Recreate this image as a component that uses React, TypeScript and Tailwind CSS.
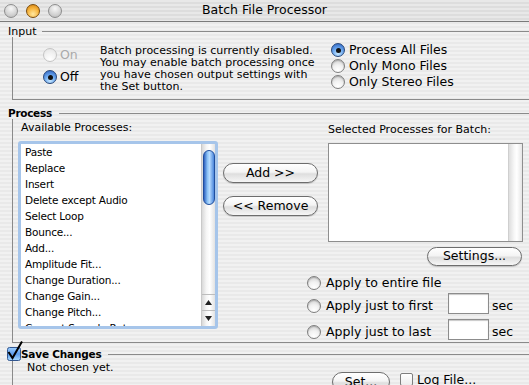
import React from 'react';

const processes = [
  'Paste',
  'Replace',
  'Insert',
  'Delete except Audio',
  'Select Loop',
  'Bounce...',
  'Add...',
  'Amplitude Fit...',
  'Change Duration...',
  'Change Gain...',
  'Change Pitch...',
  'Convert Sample Rate',
];

const Radio: React.FC<{ checked?: boolean; disabled?: boolean }> = ({ checked, disabled }) => {
  if (checked) {
    return (
      <span className="flex h-[14px] w-[14px] shrink-0 items-center justify-center rounded-full border border-[#27477a] bg-[radial-gradient(circle_at_50%_80%,#c8e8ff_0%,#6eaaf0_45%,#2d62c0_95%)]">
        <span className="h-[5px] w-[5px] rounded-full bg-[#111]" />
      </span>
    );
  }
  if (disabled) {
    return <span className="h-[14px] w-[14px] shrink-0 rounded-full border border-[#c4c4c4] bg-[radial-gradient(circle_at_50%_85%,#ffffff_0%,#f2f2f2_50%,#e2e2e2_100%)]" />;
  }
  return (
    <span className="h-[14px] w-[14px] shrink-0 rounded-full border border-[#7e7e7e] bg-[radial-gradient(circle_at_50%_85%,#ffffff_0%,#f1f1f1_45%,#c6c6c6_100%)] shadow-[inset_0_1px_1px_rgba(0,0,0,0.2)]" />
  );
};

const AquaButton: React.FC<{ children: React.ReactNode; className?: string }> = ({ children, className }) => (
  <button
    className={`flex items-center justify-center rounded-full border border-[#6d6d6d] bg-[linear-gradient(to_bottom,#ffffff_0%,#f4f4f4_45%,#dedede_55%,#f6f6f6_100%)] text-[12.5px] leading-none text-black shadow-[0_1px_1px_rgba(0,0,0,0.18)] ${className ?? ''}`}
  >
    {children}
  </button>
);

const ArrowUp = () => (
  <svg width="7" height="5" viewBox="0 0 7 5">
    <path d="M3.5 0 L7 5 L0 5 Z" fill="#222" />
  </svg>
);

const ArrowDown = () => (
  <svg width="7" height="5" viewBox="0 0 7 5">
    <path d="M0 0 L7 0 L3.5 5 Z" fill="#222" />
  </svg>
);

const TextBox = () => (
  <div className="h-[21px] w-[41px] border border-[#8c8c8c] bg-white shadow-[inset_0_1px_1px_rgba(0,0,0,0.22)]" />
);

const App: React.FC = () => {
  return (
    <div className="flex h-[385px] w-[529px] flex-col overflow-hidden bg-[repeating-linear-gradient(to_bottom,#f1f1f1_0px,#f1f1f1_2px,#e9e9e9_2px,#e9e9e9_4px)] font-['DejaVu_Sans',sans-serif] text-black">
      {/* title bar */}
      <div className="grid h-[22px] shrink-0 grid-cols-[1fr_auto_1fr] items-center border-b border-[#7b7b7b] bg-[repeating-linear-gradient(to_bottom,#e8e8e8_0px,#e8e8e8_2px,#dddddd_2px,#dddddd_4px)]">
        <div className="flex items-center gap-[8px] pl-[4px]">
          <span className="h-[14px] w-[14px] rounded-full border border-[#8d8d8d] bg-[radial-gradient(circle_at_50%_30%,#f7f7f7_0%,#d2d2d2_60%,#b4b4b4_100%)]" />
          <span className="h-[14px] w-[14px] rounded-full border border-[#7a4c0c] bg-[radial-gradient(circle_at_50%_75%,#ffe8a0_0%,#f6b23a_55%,#cf7c0c_100%)]" />
          <span className="h-[14px] w-[14px] rounded-full border border-[#8d8d8d] bg-[radial-gradient(circle_at_50%_30%,#f7f7f7_0%,#d2d2d2_60%,#b4b4b4_100%)]" />
        </div>
        <div className="text-[12.5px] leading-none">Batch File Processor</div>
        <div />
      </div>

      {/* Input */}
      <div className="mt-[3px] flex h-[12px] shrink-0 items-center pl-2">
        <span className="text-[11px] leading-none">Input</span>
        <span className="ml-[6px] h-px flex-1 bg-[#8a8a8a]" />
      </div>
      <div className="ml-3 flex h-[63px] shrink-0 items-start border-b border-l border-[#8a8a8a]">
        <div className="ml-[30px] mt-[11px] flex w-[57px] shrink-0 flex-col gap-[8px]">
          <div className="flex h-[14px] items-center gap-[3px]">
            <Radio disabled />
            <span className="text-[12.5px] leading-none text-[#a9a9a9]">On</span>
          </div>
          <div className="flex h-[14px] items-center gap-[3px]">
            <Radio checked />
            <span className="text-[12.5px] leading-none">Off</span>
          </div>
        </div>
        <p className="mt-[8px] w-[231px] shrink-0 whitespace-nowrap text-[11px] leading-[12px]">
          Batch processing is currently disabled.
          <br />
          You may enable batch processing once
          <br />
          you have chosen output settings with
          <br />
          the Set button.
        </p>
        <div className="mt-[6px] flex shrink-0 flex-col gap-[2px]">
          {['Process All Files', 'Only Mono Files', 'Only Stereo Files'].map((label, i) => (
            <div key={label} className="flex h-[14px] items-center gap-[4px]">
              <Radio checked={i === 0} />
              <span className="whitespace-nowrap text-[12.5px] leading-none">{label}</span>
            </div>
          ))}
        </div>
      </div>

      {/* Process */}
      <div className="mt-[7px] flex h-[12px] shrink-0 items-center pl-2">
        <span className="text-[10.5px] font-bold leading-none tracking-[-0.3px]">Process</span>
        <span className="ml-[7px] h-px flex-1 bg-[#8a8a8a]" />
      </div>
      <div className="ml-3 flex h-[224px] shrink-0 border-b border-l border-[#8a8a8a]">
        <div className="w-[205px] shrink-0">
          <div className="pl-[8px] pt-[3px] text-[11px] leading-[12px]">Available Processes:</div>
          <div className="ml-[5px] mt-[7px] flex h-[188px] w-[200px] rounded-[3px] border-[3px] border-[#a6c5ea]">
            <div className="flex-1 overflow-hidden bg-white pl-[4px]">
              {processes.map((p) => (
                <div key={p} className="h-[16px] whitespace-nowrap text-[10.5px] leading-[16px] tracking-[-0.2px]">
                  {p}
                </div>
              ))}
            </div>
            <div className="flex w-[14px] flex-col border-l border-[#c9c9c9] bg-[linear-gradient(to_right,#d9d9d9,#f6f6f6_35%,#ffffff_60%,#e2e2e2)]">
              <div className="flex-1 pt-[6px]">
                <div className="mx-auto h-[55px] w-[12px] rounded-full border border-[#1f4e9e] bg-[linear-gradient(to_right,#2e62c0,#8ec4f6_35%,#b7dcff_55%,#4a85db)]" />
              </div>
              <div className="flex h-[16px] items-center justify-center border-t border-[#bdbdbd]">
                <ArrowUp />
              </div>
              <div className="flex h-[16px] items-center justify-center border-t border-[#bdbdbd]">
                <ArrowDown />
              </div>
            </div>
          </div>
        </div>

        <div className="ml-[5px] flex flex-col">
          <div className="flex items-start">
            <div className="mt-[44px] flex w-[95px] shrink-0 flex-col gap-[13px]">
              <AquaButton className="h-[20px] w-[95px]">Add &gt;&gt;</AquaButton>
              <AquaButton className="h-[20px] w-[95px]">&lt;&lt; Remove</AquaButton>
            </div>
            <div className="ml-[10px] shrink-0">
              <div className="mt-[5px] whitespace-nowrap text-[11px] leading-[12px]">Selected Processes for Batch:</div>
              <div className="mt-[7px] flex h-[99px] w-[195px] border border-[#8e8e8e] bg-white">
                <div className="flex-1" />
                <div className="w-[14px] border-l border-[#cfcfcf] bg-[linear-gradient(to_right,#dedede,#f7f7f7_40%,#ffffff_60%,#e6e6e6)]" />
              </div>
            </div>
          </div>

          <AquaButton className="ml-[204px] mt-[5px] h-[19px] w-[95px]">Settings...</AquaButton>

          <div className="ml-[84px] mt-[9px] flex h-[16px] items-center gap-[5px]">
            <Radio />
            <span className="whitespace-nowrap text-[12.5px] leading-none">Apply to entire file</span>
          </div>
          <div className="ml-[84px] mt-[2px] flex h-[21px] items-end">
            <div className="flex w-[141px] items-center gap-[5px] pb-[1px]">
              <Radio />
              <span className="whitespace-nowrap text-[12.5px] leading-none">Apply just to first</span>
            </div>
            <TextBox />
            <span className="ml-[3px] pb-[2px] text-[12.5px] leading-none">sec</span>
          </div>
          <div className="ml-[84px] mt-[5px] flex h-[21px] items-end">
            <div className="flex w-[141px] items-center gap-[5px] pb-[1px]">
              <Radio />
              <span className="whitespace-nowrap text-[12.5px] leading-none">Apply just to last</span>
            </div>
            <TextBox />
            <span className="ml-[3px] pb-[2px] text-[12.5px] leading-none">sec</span>
          </div>
        </div>
      </div>

      {/* Save Changes */}
      <div className="mt-[4px] flex h-[14px] shrink-0 items-center pl-[7px]">
        <svg width="14" height="14" viewBox="0 0 14 14" className="shrink-0 overflow-visible">
          <defs>
            <linearGradient id="cbfill" x1="0" y1="0" x2="0" y2="1">
              <stop offset="0" stopColor="#9fd0ff" />
              <stop offset="0.5" stopColor="#5c9ceb" />
              <stop offset="1" stopColor="#a9dbff" />
            </linearGradient>
          </defs>
          <rect x="0.5" y="0.5" width="13" height="13" rx="2" fill="url(#cbfill)" stroke="#32568f" />
          <path d="M1.5 5 L5.5 11 L15 -5.5" stroke="#000" strokeWidth="2" fill="none" strokeLinejoin="miter" />
        </svg>
        <span className="text-[10.5px] font-bold leading-none tracking-[-0.2px]">Save Changes</span>
        <span className="ml-[6px] h-px flex-1 bg-[#8a8a8a]" />
      </div>
      <div className="ml-3 flex flex-1 flex-col border-l border-[#8a8a8a]">
        <div className="mt-[1px] pl-[14px] text-[11px] leading-[12px]">Not chosen yet.</div>
        <div className="-mt-[2px] flex items-start">
          <AquaButton className="ml-[319px] h-[20px] w-[58px]">Set...</AquaButton>
          <span className="ml-[10px] mt-[1px] h-[13px] w-[13px] rounded-[2px] border border-[#7e7e7e] bg-[linear-gradient(to_bottom,#ffffff,#ececec)]" />
          <span className="ml-[4px] mt-[1px] text-[12.5px] leading-[14px]">Log File...</span>
        </div>
      </div>
    </div>
  );
};

export default App;
